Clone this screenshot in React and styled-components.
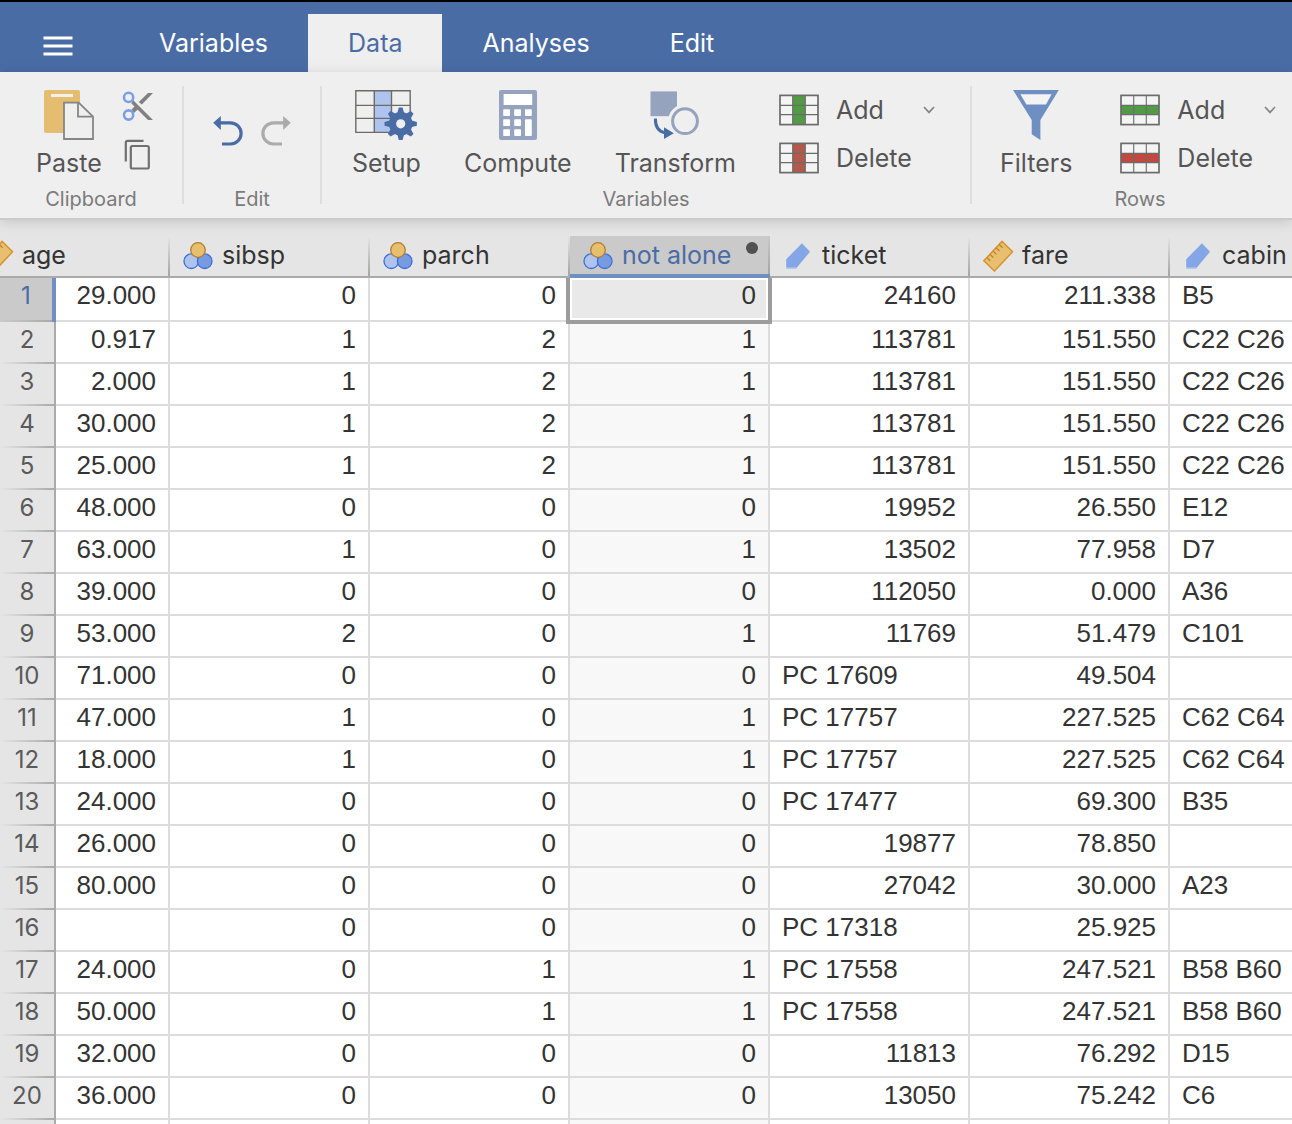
import React from "react";
import styled, { createGlobalStyle } from "styled-components";

const tabs = ["Variables", "Data", "Analyses", "Edit"];

const columns = [
  { name: "age", type: "continuous", scrolled: true },
  { name: "sibsp", type: "nominal" },
  { name: "parch", type: "nominal" },
  { name: "not alone", type: "nominal", selected: true },
  { name: "ticket", type: "id" },
  { name: "fare", type: "continuous" },
  { name: "cabin", type: "id" },
];

const rows = [
  ["29.000", "0", "0", "0", "24160", "211.338", "B5"],
  ["0.917", "1", "2", "1", "113781", "151.550", "C22 C26"],
  ["2.000", "1", "2", "1", "113781", "151.550", "C22 C26"],
  ["30.000", "1", "2", "1", "113781", "151.550", "C22 C26"],
  ["25.000", "1", "2", "1", "113781", "151.550", "C22 C26"],
  ["48.000", "0", "0", "0", "19952", "26.550", "E12"],
  ["63.000", "1", "0", "1", "13502", "77.958", "D7"],
  ["39.000", "0", "0", "0", "112050", "0.000", "A36"],
  ["53.000", "2", "0", "1", "11769", "51.479", "C101"],
  ["71.000", "0", "0", "0", "PC 17609", "49.504", ""],
  ["47.000", "1", "0", "1", "PC 17757", "227.525", "C62 C64"],
  ["18.000", "1", "0", "1", "PC 17757", "227.525", "C62 C64"],
  ["24.000", "0", "0", "0", "PC 17477", "69.300", "B35"],
  ["26.000", "0", "0", "0", "19877", "78.850", ""],
  ["80.000", "0", "0", "0", "27042", "30.000", "A23"],
  ["", "0", "0", "0", "PC 17318", "25.925", ""],
  ["24.000", "0", "1", "1", "PC 17558", "247.521", "B58 B60"],
  ["50.000", "0", "1", "1", "PC 17558", "247.521", "B58 B60"],
  ["32.000", "0", "0", "0", "11813", "76.292", "D15"],
  ["36.000", "0", "0", "0", "13050", "75.242", "C6"],
];

export default function App() {
  return (
    <Page>
      <GlobalStyle />
      <TabBar>
        <MenuButton aria-label="Menu">
          <MenuIcon />
        </MenuButton>
        {tabs.map((e) => (
          <Tab key={e} $active={e === "Data"}>
            {e}
          </Tab>
        ))}
      </TabBar>
      <Ribbon>
        <Group $width={182}>
          <Tools $start={36}>
            <BigButton>
              <PasteIcon />
              Paste
            </BigButton>
            <ClipTools>
              <IconButton aria-label="Cut">
                <CutIcon />
              </IconButton>
              <IconButton aria-label="Copy">
                <CopyIcon />
              </IconButton>
            </ClipTools>
          </Tools>
          <GroupLabel>Clipboard</GroupLabel>
        </Group>
        <Separator />
        <Group $width={136}>
          <HistoryTools>
            <IconButton aria-label="Undo">
              <UndoIcon />
            </IconButton>
            <IconButton aria-label="Redo">
              <RedoIcon />
            </IconButton>
          </HistoryTools>
          <GroupLabel>Edit</GroupLabel>
        </Group>
        <Separator />
        <Group $width={648}>
          <Tools $start={30} $gap={43}>
            <BigButton>
              <SetupIcon />
              Setup
            </BigButton>
            <BigButton>
              <ComputeIcon />
              Compute
            </BigButton>
            <BigButton>
              <TransformIcon />
              Transform
            </BigButton>
            <StackedTools>
              <SmallButton>
                <ColumnIcon color="#539a46" />
                Add
                <Chevron />
              </SmallButton>
              <SmallButton>
                <ColumnIcon color="#b3594b" />
                Delete
              </SmallButton>
            </StackedTools>
          </Tools>
          <GroupLabel>Variables</GroupLabel>
        </Group>
        <Separator />
        <Group $width={336}>
          <Tools $start={28} $gap={48}>
            <BigButton>
              <FilterIcon />
              Filters
            </BigButton>
            <StackedTools>
              <SmallButton>
                <RowIcon color="#539a46" />
                Add
                <Chevron />
              </SmallButton>
              <SmallButton>
                <RowIcon color="#c24840" />
                Delete
              </SmallButton>
            </StackedTools>
          </Tools>
          <GroupLabel>Rows</GroupLabel>
        </Group>
      </Ribbon>
      <Sheet>
        <Table>
          <colgroup>
            <Col $width={56} />
            <Col $width={114} />
            {columns.slice(1).map((c) => (
              <Col key={c.name} $width={200} />
            ))}
          </colgroup>
          <thead>
            <tr>
              {columns.map((c) => (
                <HeadCell
                  key={c.name}
                  scope="col"
                  colSpan={c.scrolled ? 2 : 1}
                  $selected={c.selected}
                >
                  <HeadLabel $scrolled={c.scrolled}>
                    <TypeIcon type={c.type} />
                    {c.name}
                  </HeadLabel>
                  {c.selected && <FilterDot />}
                </HeadCell>
              ))}
            </tr>
          </thead>
          <tbody>
            {rows.map((row, i) => (
              <Row key={i} $first={i === 0}>
                <RowNumber scope="row" $selected={i === 0}>
                  {i + 1}
                </RowNumber>
                {row.map((value, j) => {
                  const selected = columns[j].selected;
                  return (
                    <Cell
                      key={j}
                      $text={/^[A-Z]/.test(value)}
                      $column={selected}
                      $focused={selected && i === 0}
                    >
                      {value}
                    </Cell>
                  );
                })}
              </Row>
            ))}
            <Row>
              <RowNumber scope="row" />
              {columns.map((c) => (
                <Cell key={c.name} $column={c.selected} />
              ))}
            </Row>
          </tbody>
        </Table>
      </Sheet>
    </Page>
  );
}

function MenuIcon() {
  return (
    <svg width="30" height="20" viewBox="0 0 30 20" stroke="#fff" strokeWidth="3">
      <path d="M0.5 2H29.5M0.5 10H29.5M0.5 18H29.5" />
    </svg>
  );
}

function PasteIcon() {
  return (
    <svg width="50" height="50" viewBox="0 0 50 50">
      <rect width="36" height="43" rx="2" fill="#e4bd70" />
      <rect x="7" y="4" width="22" height="3" fill="#f4f1ea" />
      <path
        d="M20 12.7H34.7L49 26.7V49H20Z"
        fill="#efefef"
        stroke="#858585"
        strokeWidth="1.8"
      />
      <path d="M34 12.7V26.7H49" fill="none" stroke="#858585" strokeWidth="1.8" />
    </svg>
  );
}

function CutIcon() {
  return (
    <svg width="32" height="32" viewBox="0 0 32 32">
      <path d="M10.5 9.5L31 30H26L9.5 13.5Z" fill="#808080" />
      <path d="M16.8 12L26 3H31L19.8 14.6Z" fill="#808080" />
      <path d="M9.5 19.5L14 15L17.2 18.2L12 23Z" fill="#808080" />
      <g fill="none" stroke="#7a9fe5" strokeWidth="2.6">
        <circle cx="6.6" cy="7.4" r="4.6" />
        <circle cx="6.6" cy="25" r="4.6" />
      </g>
    </svg>
  );
}

function CopyIcon() {
  return (
    <svg
      width="32"
      height="32"
      viewBox="0 0 32 32"
      fill="none"
      stroke="#707070"
      strokeWidth="2.2"
    >
      <path d="M3.8 22.5V3.6A1.8 1.8 0 0 1 5.6 1.8H21.5" />
      <rect x="8.8" y="7" width="18" height="22.5" rx="1.6" />
    </svg>
  );
}

function UndoIcon() {
  return (
    <svg width="30" height="30" viewBox="0 0 30 30">
      <path
        d="M6 6.8H17.5A10.6 10.6 0 0 1 17.5 28H9"
        fill="none"
        stroke="#4a6ca5"
        strokeWidth="3.2"
      />
      <path d="M0.2 6.8L7.8 0V14Z" fill="#4a6ca5" />
    </svg>
  );
}

function RedoIcon() {
  return (
    <svg width="30" height="30" viewBox="0 0 30 30">
      <path
        d="M24 6.8H12.5A10.6 10.6 0 0 0 12.5 28H21"
        fill="none"
        stroke="#ababab"
        strokeWidth="3.2"
      />
      <path d="M29.8 6.8L22.2 0V14Z" fill="#ababab" />
    </svg>
  );
}

function SetupIcon() {
  return (
    <svg width="62" height="50" viewBox="0 0 62 50">
      <rect x="19.3" y="1" width="17" height="41.5" fill="#aec3ee" />
      <path
        d="M0.8 0.8H55.2V42.4H0.8ZM19.3 0.8V42.4M36.5 0.8V42.4M0.8 15.4H55.2M0.8 28.4H55.2"
        fill="none"
        stroke="#6b6b68"
        strokeWidth="1.4"
      />
      <g fill="#4a6ca5">
        {[0, 45, 90, 135, 180, 225, 270, 315].map((a) => (
          <path
            key={a}
            d="M42.2 23.5L43.8 17.6H47.6L49.2 23.5Z"
            transform={`rotate(${a} 45.7 33.8)`}
          />
        ))}
        <circle cx="45.7" cy="33.8" r="11.8" />
      </g>
      <circle cx="45.7" cy="33.8" r="4.6" fill="#efefef" />
    </svg>
  );
}

function ComputeIcon() {
  return (
    <svg width="38" height="50" viewBox="0 0 38 50">
      <rect width="38" height="50" rx="2" fill="#95a3be" />
      <g fill="#fff">
        <rect x="4.6" y="4" width="28.6" height="11" />
        {[19.2, 29.2, 39.2].map((y) => (
          <g key={y}>
            <rect x="4.2" y={y} width="6.8" height="6.8" rx="0.8" />
            <rect x="15.2" y={y} width="6.8" height="6.8" rx="0.8" />
          </g>
        ))}
        <rect x="26" y="19.2" width="6.8" height="6.8" rx="0.8" />
        <rect x="26" y="29.2" width="6.8" height="16.8" rx="0.8" />
      </g>
    </svg>
  );
}

function TransformIcon() {
  return (
    <svg width="50" height="50" viewBox="0 0 50 50">
      <rect x="0.5" y="1.4" width="26.5" height="24.8" fill="#95a3be" />
      <circle cx="35" cy="31.2" r="17" fill="#efefef" />
      <circle
        cx="35"
        cy="31.2"
        r="12.4"
        fill="none"
        stroke="#95a3be"
        strokeWidth="3"
      />
      <path
        d="M5.4 28.5C5.2 37 8 41.5 15 42.8"
        fill="none"
        stroke="#4a6ca5"
        strokeWidth="3"
      />
      <path d="M14 37.3L23.8 43.3L14 49Z" fill="#4a6ca5" />
    </svg>
  );
}

function FilterIcon() {
  return (
    <svg width="46" height="50" viewBox="0 0 46 50">
      <path d="M0 0H45.8L27.4 30V50L18.7 44.2V30Z" fill="#6f8fc2" />
      <path d="M7.4 4.2H38.6L33 14.4H13.4Z" fill="#f3f3f3" />
    </svg>
  );
}

function ColumnIcon({ color }) {
  return (
    <svg width="40" height="32" viewBox="0 0 40 32">
      <rect x="1" y="1.4" width="38" height="29.2" fill="#f4f4f4" />
      <rect x="13.7" y="1.4" width="12.6" height="29.2" fill={color} />
      <path
        d="M13.7 1V31M26.3 1V31M1 11.4H39M1 20.6H39"
        stroke="#6b6b6b"
        strokeWidth="1.1"
      />
      <rect
        x="1"
        y="1.4"
        width="38"
        height="29.2"
        fill="none"
        stroke="#6b6b6b"
        strokeWidth="1.7"
      />
    </svg>
  );
}

function RowIcon({ color }) {
  return (
    <svg width="40" height="32" viewBox="0 0 40 32">
      <rect x="1" y="1.4" width="38" height="29.2" fill="#f4f4f4" />
      <rect x="1" y="11.4" width="38" height="9.2" fill={color} />
      <path
        d="M13.7 1V31M26.3 1V31M1 11.4H39M1 20.6H39"
        stroke="#6b6b6b"
        strokeWidth="1.1"
      />
      <rect
        x="1"
        y="1.4"
        width="38"
        height="29.2"
        fill="none"
        stroke="#6b6b6b"
        strokeWidth="1.7"
      />
    </svg>
  );
}

function Chevron() {
  return (
    <ChevronSvg width="12" height="8" viewBox="0 0 12 8">
      <path d="M1 1L6 6.4L11 1" fill="none" stroke="#858585" strokeWidth="1.7" />
    </ChevronSvg>
  );
}

function TypeIcon({ type }) {
  if (type === "nominal") {
    return (
      <svg width="32" height="34" viewBox="0 -2 32 34" strokeWidth="1.3">
        <circle cx="9.3" cy="21.2" r="7.3" fill="#aec3ee" stroke="#3e6dd8" />
        <circle cx="22.7" cy="21.2" r="7.3" fill="#769be0" stroke="#3e6dd8" />
        <circle cx="16" cy="10" r="7.3" fill="#e8bf6f" stroke="#b0802c" />
      </svg>
    );
  }
  if (type === "continuous") {
    return (
      <svg width="32" height="34" viewBox="0 -2 32 34" stroke="#d8942f">
        <path d="M20 1.4L30.6 11.8L12.4 31L1.8 20.8Z" fill="#e8bf6f" strokeWidth="1.5" />
        <path
          d="M17.3 4.5L20.6 7.8M14.2 7.8L17.5 11.1M11.1 11.1L14.4 14.4M8 14.4L11.3 17.7M5 17.6L8.3 20.9"
          stroke="#b87f28"
          strokeWidth="1.2"
        />
      </svg>
    );
  }
  return (
    <svg width="32" height="34" viewBox="0 -2 32 34">
      <path d="M4.2 19.3L20 3.2L28 11.8L14.6 27.8H4.2Z" fill="#84a6e7" />
      <path d="M4.2 28.2H14.4" stroke="#a9c1f0" strokeWidth="1.2" />
    </svg>
  );
}

const GlobalStyle = createGlobalStyle`
  * {
    box-sizing: border-box;
  }
  body {
    margin: 0;
    overflow: hidden;
  }
  svg {
    display: block;
    flex-shrink: 0;
  }
  button {
    border: 0;
    padding: 0;
    background: none;
    color: inherit;
    font: inherit;
    cursor: pointer;
  }
`;

const Page = styled.div`
  display: flex;
  flex-direction: column;
  height: 100vh;
  overflow: hidden;
  background-color: #e5e5e5;
  color: #333;
  font-family: Inter, "Liberation Sans", sans-serif;
  font-size: 25px;
`;

const TabBar = styled.nav`
  display: flex;
  flex-shrink: 0;
  height: 72px;
  padding-top: 12px;
  border-top: 2px solid #000;
  background-color: #4a6ca5;
`;

const MenuButton = styled.button`
  display: flex;
  align-items: center;
  width: 119px;
  padding: 6px 0 0 43px;
`;

const Tab = styled.button`
  padding: 0 40px;
  color: ${(p) => (p.$active ? "#4a6ca5" : "#fff")};
  background-color: ${(p) => (p.$active ? "#efefef" : "transparent")};
`;

const Ribbon = styled.div`
  position: relative;
  z-index: 1;
  display: flex;
  flex-shrink: 0;
  padding: 14px 0 7px;
  border-bottom: 2px solid #cbcbcb;
  background-color: #efefef;
  color: #555;
  box-shadow: 0 2px 12px rgba(0, 0, 0, 0.14);
`;

const Group = styled.section`
  display: flex;
  flex-direction: column;
  flex-shrink: 0;
  width: ${(p) => p.$width}px;
`;

const Separator = styled.div`
  flex-shrink: 0;
  width: 2px;
  margin-bottom: 7px;
  background-color: #dedede;
`;

const Tools = styled.div`
  display: flex;
  align-items: flex-start;
  gap: ${(p) => p.$gap || 20}px;
  height: 101px;
  padding: 4px 0 0 ${(p) => p.$start}px;
`;

const HistoryTools = styled.div`
  display: flex;
  justify-content: center;
  align-items: flex-start;
  gap: 18px;
  height: 101px;
  padding-top: 30px;
`;

const GroupLabel = styled.div`
  color: #7b7b7b;
  font-size: 20px;
  line-height: 24px;
  text-align: center;
`;

const BigButton = styled.button`
  display: flex;
  flex-direction: column;
  align-items: center;
  gap: 8px;
  line-height: 30px;
`;

const ClipTools = styled.div`
  display: flex;
  flex-direction: column;
  gap: 17px;
`;

const IconButton = styled.button`
  display: block;
`;

const StackedTools = styled.div`
  display: flex;
  flex-direction: column;
  gap: 16px;
  padding-top: 4px;
`;

const SmallButton = styled.button`
  display: flex;
  align-items: center;
  gap: 17px;
  width: 156px;
  height: 32px;
  line-height: 30px;
`;

const ChevronSvg = styled.svg`
  margin-left: auto;
`;

const Sheet = styled.main`
  flex: 1;
  min-height: 0;
  padding-top: 16px;
  overflow: hidden;
`;

const Table = styled.table`
  table-layout: fixed;
  width: 1370px;
  border-collapse: separate;
  border-spacing: 0;
`;

const Col = styled.col`
  width: ${(p) => p.$width}px;
`;

const HeadCell = styled.th`
  position: relative;
  height: 42px;
  padding: 0;
  border-bottom: ${(p) => (p.$selected ? "4px solid #6f8fc2" : "2px solid #aaa")};
  background: linear-gradient(rgba(160, 160, 160, 0), #a4a4a4) right / 2px 100%
    no-repeat ${(p) => (p.$selected ? "#cacaca" : "#e5e5e5")};
  color: ${(p) => (p.$selected ? "#4a6ca5" : "#333")};
  font-weight: 400;
  text-align: left;
  vertical-align: top;
`;

const HeadLabel = styled.div`
  display: flex;
  align-items: center;
  gap: 8px;
  height: 38px;
  margin-left: ${(p) => (p.$scrolled ? "-30px" : "0")};
  padding-left: 12px;
  white-space: nowrap;
`;

const FilterDot = styled.span`
  position: absolute;
  top: 6px;
  right: 12px;
  width: 12px;
  height: 12px;
  border-radius: 50%;
  background-color: #505050;
`;

const Row = styled.tr`
  height: ${(p) => (p.$first ? 44 : 42)}px;
`;

const RowNumber = styled.th`
  padding: 0;
  border-right: ${(p) => (p.$selected ? "4px solid #6f8fc2" : "2px solid #aaa")};
  background: linear-gradient(to right, rgba(170, 170, 170, 0), #aaa) bottom /
    100% 2px no-repeat ${(p) => (p.$selected ? "#cacaca" : "#e5e5e5")};
  color: ${(p) => (p.$selected ? "#4a6ca5" : "#5a5a5a")};
  font-size: 24px;
  font-weight: 400;
  line-height: 36px;
  vertical-align: top;
`;

const Cell = styled.td`
  position: relative;
  padding: 0 12px;
  border-right: 2px solid #dcdcdc;
  border-bottom: 2px solid #dcdcdc;
  background-color: ${(p) =>
    p.$focused ? "#e9e9e9" : p.$column ? "#f8f8f8" : "#fff"};
  color: #333;
  font-family: "Liberation Sans", Arial, sans-serif;
  font-size: 26px;
  line-height: 34px;
  text-align: ${(p) => (p.$text ? "left" : "right")};
  vertical-align: top;
  white-space: nowrap;

  /* focus frame, drawn over the neighbouring grid lines */
  &::after {
    content: "";
    display: ${(p) => (p.$focused ? "block" : "none")};
    position: absolute;
    z-index: 1;
    inset: 0 -4px -4px;
    border: 4px solid #9c9c9c;
    border-top: 0;
    box-shadow: inset 0 0 0 2px #fff;
  }
`;
